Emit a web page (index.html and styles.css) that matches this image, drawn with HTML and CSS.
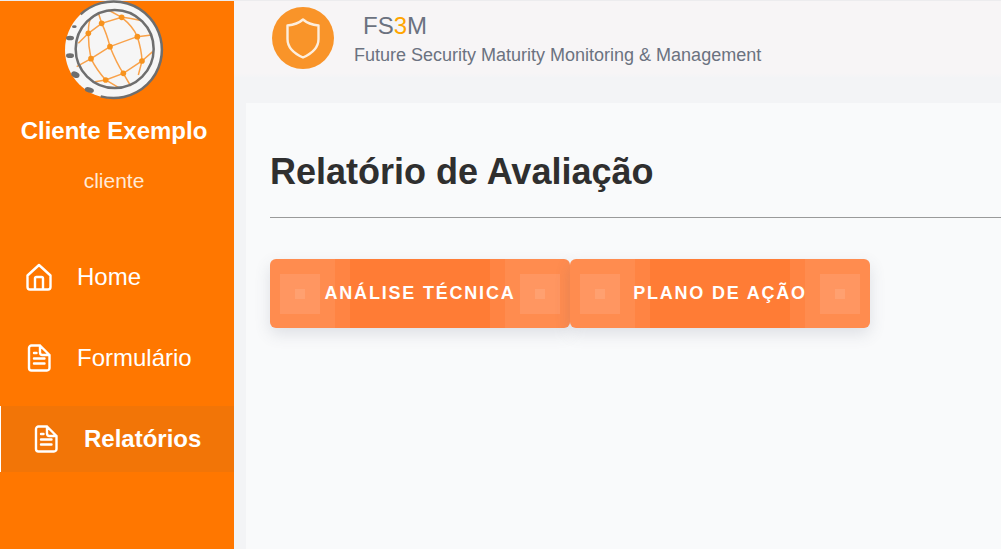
FILE: index.html
```html
<!DOCTYPE html>
<html lang="pt">
<head>
<meta charset="utf-8">
<title>FS3M</title>
<link rel="stylesheet" href="styles.css">
</head>
<body>
<div class="app">
  <aside class="sidebar">
    <svg class="globe" viewBox="0 0 330 315" width="110" height="105" aria-hidden="true">
      <circle cx="160" cy="150" r="145" fill="#f6f6f6"/>
      <g fill="none" stroke="#f9a24a" stroke-width="4.500">
        <path d="M145 30 L185 52 Q210 55 245 62"/>
        <path d="M55 130 L85 100 L125 70 L185 52"/>
        <path d="M85 100 Q85 60 95 50"/>
        <path d="M115 38 L125 70 Q140 100 150 140 Q170 190 190 220 L212 258"/>
        <path d="M85 100 Q85 140 93 176 Q110 210 137 240 L180 265"/>
        <path d="M185 52 Q220 80 232 110 Q245 150 246 183 L235 225"/>
        <path d="M50 200 L93 176 L150 140 Q190 125 232 110 L275 105"/>
        <path d="M105 245 L137 240 L190 220 L246 183 L278 155"/>
      </g>
      <g fill="#f7931e">
        <circle cx="185" cy="52" r="8.500"/><circle cx="125" cy="70" r="8.500"/><circle cx="85" cy="100" r="8.500"/>
        <circle cx="232" cy="110" r="8.500"/><circle cx="150" cy="140" r="8.500"/><circle cx="93" cy="176" r="8.500"/>
        <circle cx="246" cy="183" r="8.500"/><circle cx="190" cy="220" r="8.500"/><circle cx="137" cy="240" r="8.500"/>
      </g>
      <circle cx="164" cy="147" r="117" fill="none" stroke="#6e6e6e" stroke-width="7.500"/>
      <path d="M62 43 A145 145 0 1 1 122 289" fill="none" stroke="#6e6e6e" stroke-width="7.500"/>
      <g fill="#6e6e6e">
        <ellipse cx="43" cy="80" rx="7" ry="4"/><ellipse cx="30" cy="114" rx="12" ry="7"/>
        <ellipse cx="30" cy="167" rx="12" ry="7"/><ellipse cx="46" cy="224" rx="13" ry="9" transform="rotate(25 46 224)"/>
        <ellipse cx="88" cy="270" rx="14" ry="8" transform="rotate(15 88 270)"/>
      </g>
    </svg>
    <h2 class="client-name">Cliente Exemplo</h2>
    <p class="client-role">cliente</p>
    <nav class="nav">
      <a class="nav-item">
        <svg class="nav-icon" viewBox="0 0 26 28" aria-hidden="true"><path d="M1.500 12.500 L13 2 L24.500 12.500 V24 a2.500 2.500 0 0 1 -2.500 2.500 H4 A2.500 2.500 0 0 1 1.500 24 Z M9 26.500 V15.500 a1.500 1.500 0 0 1 1.500 -1.500 h5 a1.500 1.500 0 0 1 1.500 1.500 V26.500"/></svg>
        <span>Home</span>
      </a>
      <a class="nav-item">
        <svg class="nav-icon" viewBox="0 0 26 28" aria-hidden="true"><path d="M3 4 a2.500 2.500 0 0 1 2.500 -2.500 H14 L23.500 11 V24 a2.500 2.500 0 0 1 -2.500 2.500 H5.500 A2.500 2.500 0 0 1 3 24 Z M14 1.500 V8.500 a2.500 2.500 0 0 0 2.500 2.500 H23.500 M8 9 h2.500 M8 14.500 h10.500 M8 19.500 h10.500"/></svg>
        <span>Formulário</span>
      </a>
      <a class="nav-item active">
        <svg class="nav-icon" viewBox="0 0 26 28" aria-hidden="true"><path d="M3 4 a2.500 2.500 0 0 1 2.500 -2.500 H14 L23.500 11 V24 a2.500 2.500 0 0 1 -2.500 2.500 H5.500 A2.500 2.500 0 0 1 3 24 Z M14 1.500 V8.500 a2.500 2.500 0 0 0 2.500 2.500 H23.500 M8 9 h2.500 M8 14.500 h10.500 M8 19.500 h10.500"/></svg>
        <span>Relatórios</span>
      </a>
    </nav>
  </aside>
  <div class="main">
    <header class="topbar">
      <div class="shield">
        <svg viewBox="0 0 34 41" width="34" height="41" aria-hidden="true"><path d="M17 1.500 C21 5 26 6.800 32.500 7.500 V21 C32.500 29 26 35.500 17 39.500 C8 35.500 1.500 29 1.500 21 V7.500 C8 6.800 13 5 17 1.500 Z" fill="none" stroke="#fdeedd" stroke-width="2.400" stroke-linejoin="round"/></svg>
      </div>
      <div class="brand">
        <div class="brand-name">FS<span class="brand-accent">3</span>M</div>
        <div class="brand-sub">Future Security Maturity Monitoring &amp; Management</div>
      </div>
    </header>
    <main class="card">
      <h1 class="title">Relatório de Avaliação</h1>
      <hr class="rule">
      <div class="actions">
        <button class="action">ANÁLISE TÉCNICA</button>
        <button class="action">PLANO DE AÇÃO</button>
      </div>
    </main>
  </div>
</div>
</body>
</html>
```
FILE: styles.css
```css
* { box-sizing: border-box; }
html, body { height: 100%; }
body {
  margin: 0;
  overflow: hidden;
  background: #ececee;
  font-family: "Liberation Sans", Arial, sans-serif;
}
.app {
  display: flex;
  height: 548px;
  margin-top: 1px;
}
.sidebar {
  width: 234px;
  flex: none;
  background: #ff7700;
  display: flex;
  flex-direction: column;
  align-items: center;
  color: #fff;
}
.globe {
  display: block;
  flex: none;
  margin-left: -4px;
  margin-top: -1px;
}
.client-name {
  margin: 13px 6px 0 0;
  font-size: 24px;
  line-height: 26px;
  font-weight: 700;
}
.client-role {
  margin: 25px 6px 0 0;
  font-size: 21px;
  line-height: 24px;
  color: #ffe9d6;
}
.nav {
  align-self: stretch;
  margin-top: 51px;
  display: flex;
  flex-direction: column;
  gap: 15px;
}
.nav-item {
  height: 66px;
  display: flex;
  align-items: center;
  gap: 25px;
  padding-left: 26px;
  font-size: 24px;
  color: #fff;
}
.nav-item.active {
  background: #f27507;
  border-left: 1px solid #fff;
  padding-left: 32px;
  font-weight: 700;
}
.nav-icon {
  width: 26px;
  height: 28px;
  flex: none;
  fill: none;
  stroke: #fff;
  stroke-width: 2.4;
  stroke-linecap: round;
  stroke-linejoin: round;
}
.main {
  flex: 1;
  min-width: 0;
  display: flex;
  flex-direction: column;
  background: #f3f4f6;
}
.topbar {
  height: 76px;
  flex: none;
  display: flex;
  align-items: center;
  padding-left: 38px;
  gap: 20px;
  background: linear-gradient(#f7f5f6 0 72px, #f3f4f6 78px);
}
.shield {
  width: 62px;
  height: 62px;
  margin-bottom: 2px;
  border-radius: 50%;
  background: #f99429;
  display: flex;
  align-items: center;
  justify-content: center;
  flex: none;
}
.brand {
  display: flex;
  flex-direction: column;
  gap: 5px;
  color: #6b7280;
}
.brand-name {
  font-size: 24px;
  line-height: 26px;
  padding-left: 9px;
}
.brand-accent { color: #ffa500; }
.brand-sub {
  font-size: 18px;
  line-height: 22px;
}
.card {
  flex: 1;
  margin: 26px 0 0 12px;
  padding: 45px 0 0 24px;
  background: #f9fafb;
}
.title {
  margin: 0;
  font-size: 36px;
  line-height: 48px;
  font-weight: 700;
  color: #2f2f2f;
}
.rule {
  margin: 21px 0 0;
  border: 0;
  border-top: 1px solid #9a9a9a;
}
.actions {
  display: flex;
  margin-top: 41px;
}
.action {
  width: 300px;
  height: 69px;
  padding: 0;
  border: 0;
  border-radius: 6px;
  font-family: inherit;
  font-size: 18px;
  font-weight: 700;
  letter-spacing: 1.800px;
  color: #fff;
  box-shadow: 0 6px 16px rgba(80, 90, 110, 0.16);
  background-color: #ff7c35;
  background-repeat: no-repeat;
  background-image:
    linear-gradient(#ffa070, #ffa070), linear-gradient(#ffa070, #ffa070),
    linear-gradient(#ff9661, #ff9661), linear-gradient(#ff9661, #ff9661),
    linear-gradient(#ff8c4f, #ff8c4f), linear-gradient(#ff8c4f, #ff8c4f),
    linear-gradient(#ff8443, #ff8443), linear-gradient(#ff8443, #ff8443);
  background-size:
    10px 10px, 10px 10px,
    40px 40px, 40px 40px,
    65px 100%, 65px 100%,
    80px 100%, 80px 100%;
  background-position:
    25px 30px, 265px 30px,
    10px 15px, 250px 15px,
    0 0, 100% 0,
    0 0, 100% 0;
}
```
